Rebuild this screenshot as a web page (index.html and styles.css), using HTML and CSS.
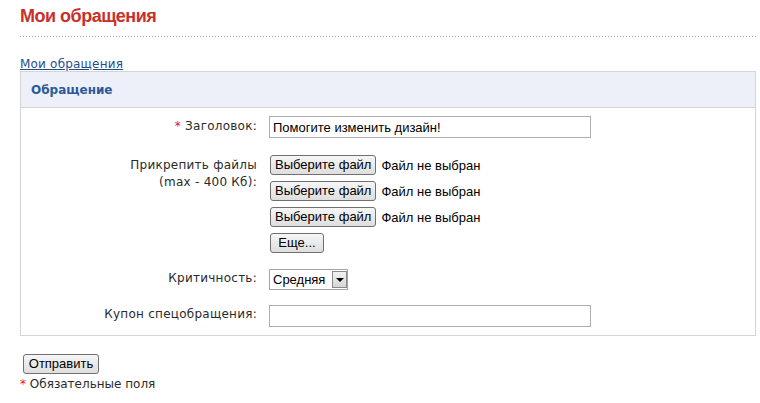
FILE: index.html
```html
<!DOCTYPE html>
<html lang="ru">
<head>
    <meta charset="UTF-8">
    <title>Мои обращения</title>
    <link rel="stylesheet" href="styles.css">
</head>
<body>
    <div class="page">
        <h1 class="page-title">Мои обращения</h1>
        <div class="dots"></div>

        <a href="#" class="crumb">Мои обращения</a>

        <!-- Ticket form -->
        <form class="ticket-box">
            <div class="ticket-head">Обращение</div>

            <div class="row row-title">
                <label class="label"><span class="req">*</span> Заголовок:</label>
                <div class="field">
                    <input type="text" class="text-input" value="Помогите изменить дизайн!">
                </div>
            </div>

            <div class="row row-files">
                <label class="label">Прикрепить файлы<br>(max - 400 Кб):</label>
                <div class="field files">
                    <div class="file-line"><button type="button" class="btn">Выберите файл</button><span class="file-note">Файл не выбран</span></div>
                    <div class="file-line"><button type="button" class="btn">Выберите файл</button><span class="file-note">Файл не выбран</span></div>
                    <div class="file-line"><button type="button" class="btn">Выберите файл</button><span class="file-note">Файл не выбран</span></div>
                    <div class="file-line"><button type="button" class="btn btn-more">Еще...</button></div>
                </div>
            </div>

            <div class="row row-level">
                <label class="label">Критичность:</label>
                <div class="field">
                    <div class="select-box">
                        <select class="select">
                            <option>Средняя</option>
                        </select>
                        <span class="select-arrow"></span>
                    </div>
                </div>
            </div>

            <div class="row row-coupon">
                <label class="label">Купон спецобращения:</label>
                <div class="field">
                    <input type="text" class="text-input">
                </div>
            </div>
        </form>

        <button type="button" class="btn btn-send">Отправить</button>
        <p class="req-note"><span class="req">*</span> Обязательные поля</p>
    </div>
</body>
</html>
```

FILE: styles.css
```css
body {
    margin: 0;
    font-family: "DejaVu Sans", Verdana, sans-serif;
    font-size: 12px;
    color: #2a2a2a;
    background: #fff;
}
.page {
    margin: 0 4px 0 20px;
}
.page-title {
    margin: 0;
    padding-top: 4px;
    font-family: "Liberation Sans", Arial, sans-serif;
    font-size: 18px;
    line-height: 24px;
    letter-spacing: -0.5px;
    color: #c8302a;
}
.dots {
    height: 1px;
    margin-top: 8px;
    background-image: linear-gradient(to right, #a8a8a8 1px, transparent 1px);
    background-size: 3px 1px;
}
.crumb {
    display: inline-block;
    margin-top: 20px;
    line-height: 14px;
    color: #1f4e8c;
    letter-spacing: 0.2px;
}
.ticket-box {
    border: 1px solid #d4d4d4;
    padding-bottom: 8px;
}
.ticket-head {
    height: 35px;
    line-height: 36px;
    padding-left: 10px;
    background: #edf0f9;
    border-bottom: 1px solid #d4d4d4;
    font-weight: bold;
    color: #2c5a98;
}
.row {
    display: flex;
    align-items: flex-start;
}
.row-title {
    margin-top: 8px;
}
.row-files {
    margin-top: 17px;
}
.row-level {
    margin-top: 16px;
}
.row-coupon {
    margin-top: 15px;
}
.label {
    width: 236px;
    flex-shrink: 0;
    text-align: right;
    line-height: 17px;
    padding-top: 2px;
    letter-spacing: 0.25px;
}
.row-level .label,
.row-coupon .label {
    padding-top: 1px;
}
.req {
    color: #e0103a;
}
.field {
    margin-left: 12px;
}
.text-input {
    box-sizing: border-box;
    width: 322px;
    height: 22px;
    padding: 0 3px;
    border: 1px solid #abadb3;
    font-family: "Liberation Sans", Arial, sans-serif;
    font-size: 13px;
    color: #000;
}
.files {
    display: flex;
    flex-direction: column;
    gap: 6px;
}
.file-line {
    display: flex;
    align-items: center;
}
.btn {
    box-sizing: border-box;
    height: 20px;
    padding: 0 4px;
    border: 1px solid #707070;
    border-radius: 3px;
    background: linear-gradient(#f6f6f6, #dedede);
    font-family: "Liberation Sans", Arial, sans-serif;
    font-size: 13px;
    color: #000;
    line-height: 18px;
    margin-left: 1px;
}
.btn-more {
    width: 54px;
}
.file-note {
    margin-left: 5px;
    font-family: "Liberation Sans", Arial, sans-serif;
    font-size: 13px;
    color: #000;
}
.select-box {
    display: flex;
    align-items: center;
    box-sizing: border-box;
    width: 79px;
    height: 21px;
    border: 1px solid #a5a5a5;
    background: #fff;
}
.select {
    appearance: none;
    -webkit-appearance: none;
    border: none;
    outline: none;
    background: transparent;
    width: 62px;
    padding: 0 0 0 3px;
    font-family: "Liberation Sans", Arial, sans-serif;
    font-size: 13px;
    color: #000;
}
.select-arrow {
    position: relative;
    box-sizing: border-box;
    width: 15px;
    height: 17px;
    border: 1px solid #8a8a8a;
    background: linear-gradient(#f2f2f2, #d6d6d6);
}
.select-arrow::after {
    content: "";
    position: absolute;
    left: 3px;
    top: 6px;
    border-left: 4px solid transparent;
    border-right: 4px solid transparent;
    border-top: 4px solid #000;
}
.btn-send {
    margin: 18px 0 0 3px;
    width: 76px;
    padding: 0;
}
.req-note {
    margin: 2px 0 0;
    line-height: 16px;
}
```
